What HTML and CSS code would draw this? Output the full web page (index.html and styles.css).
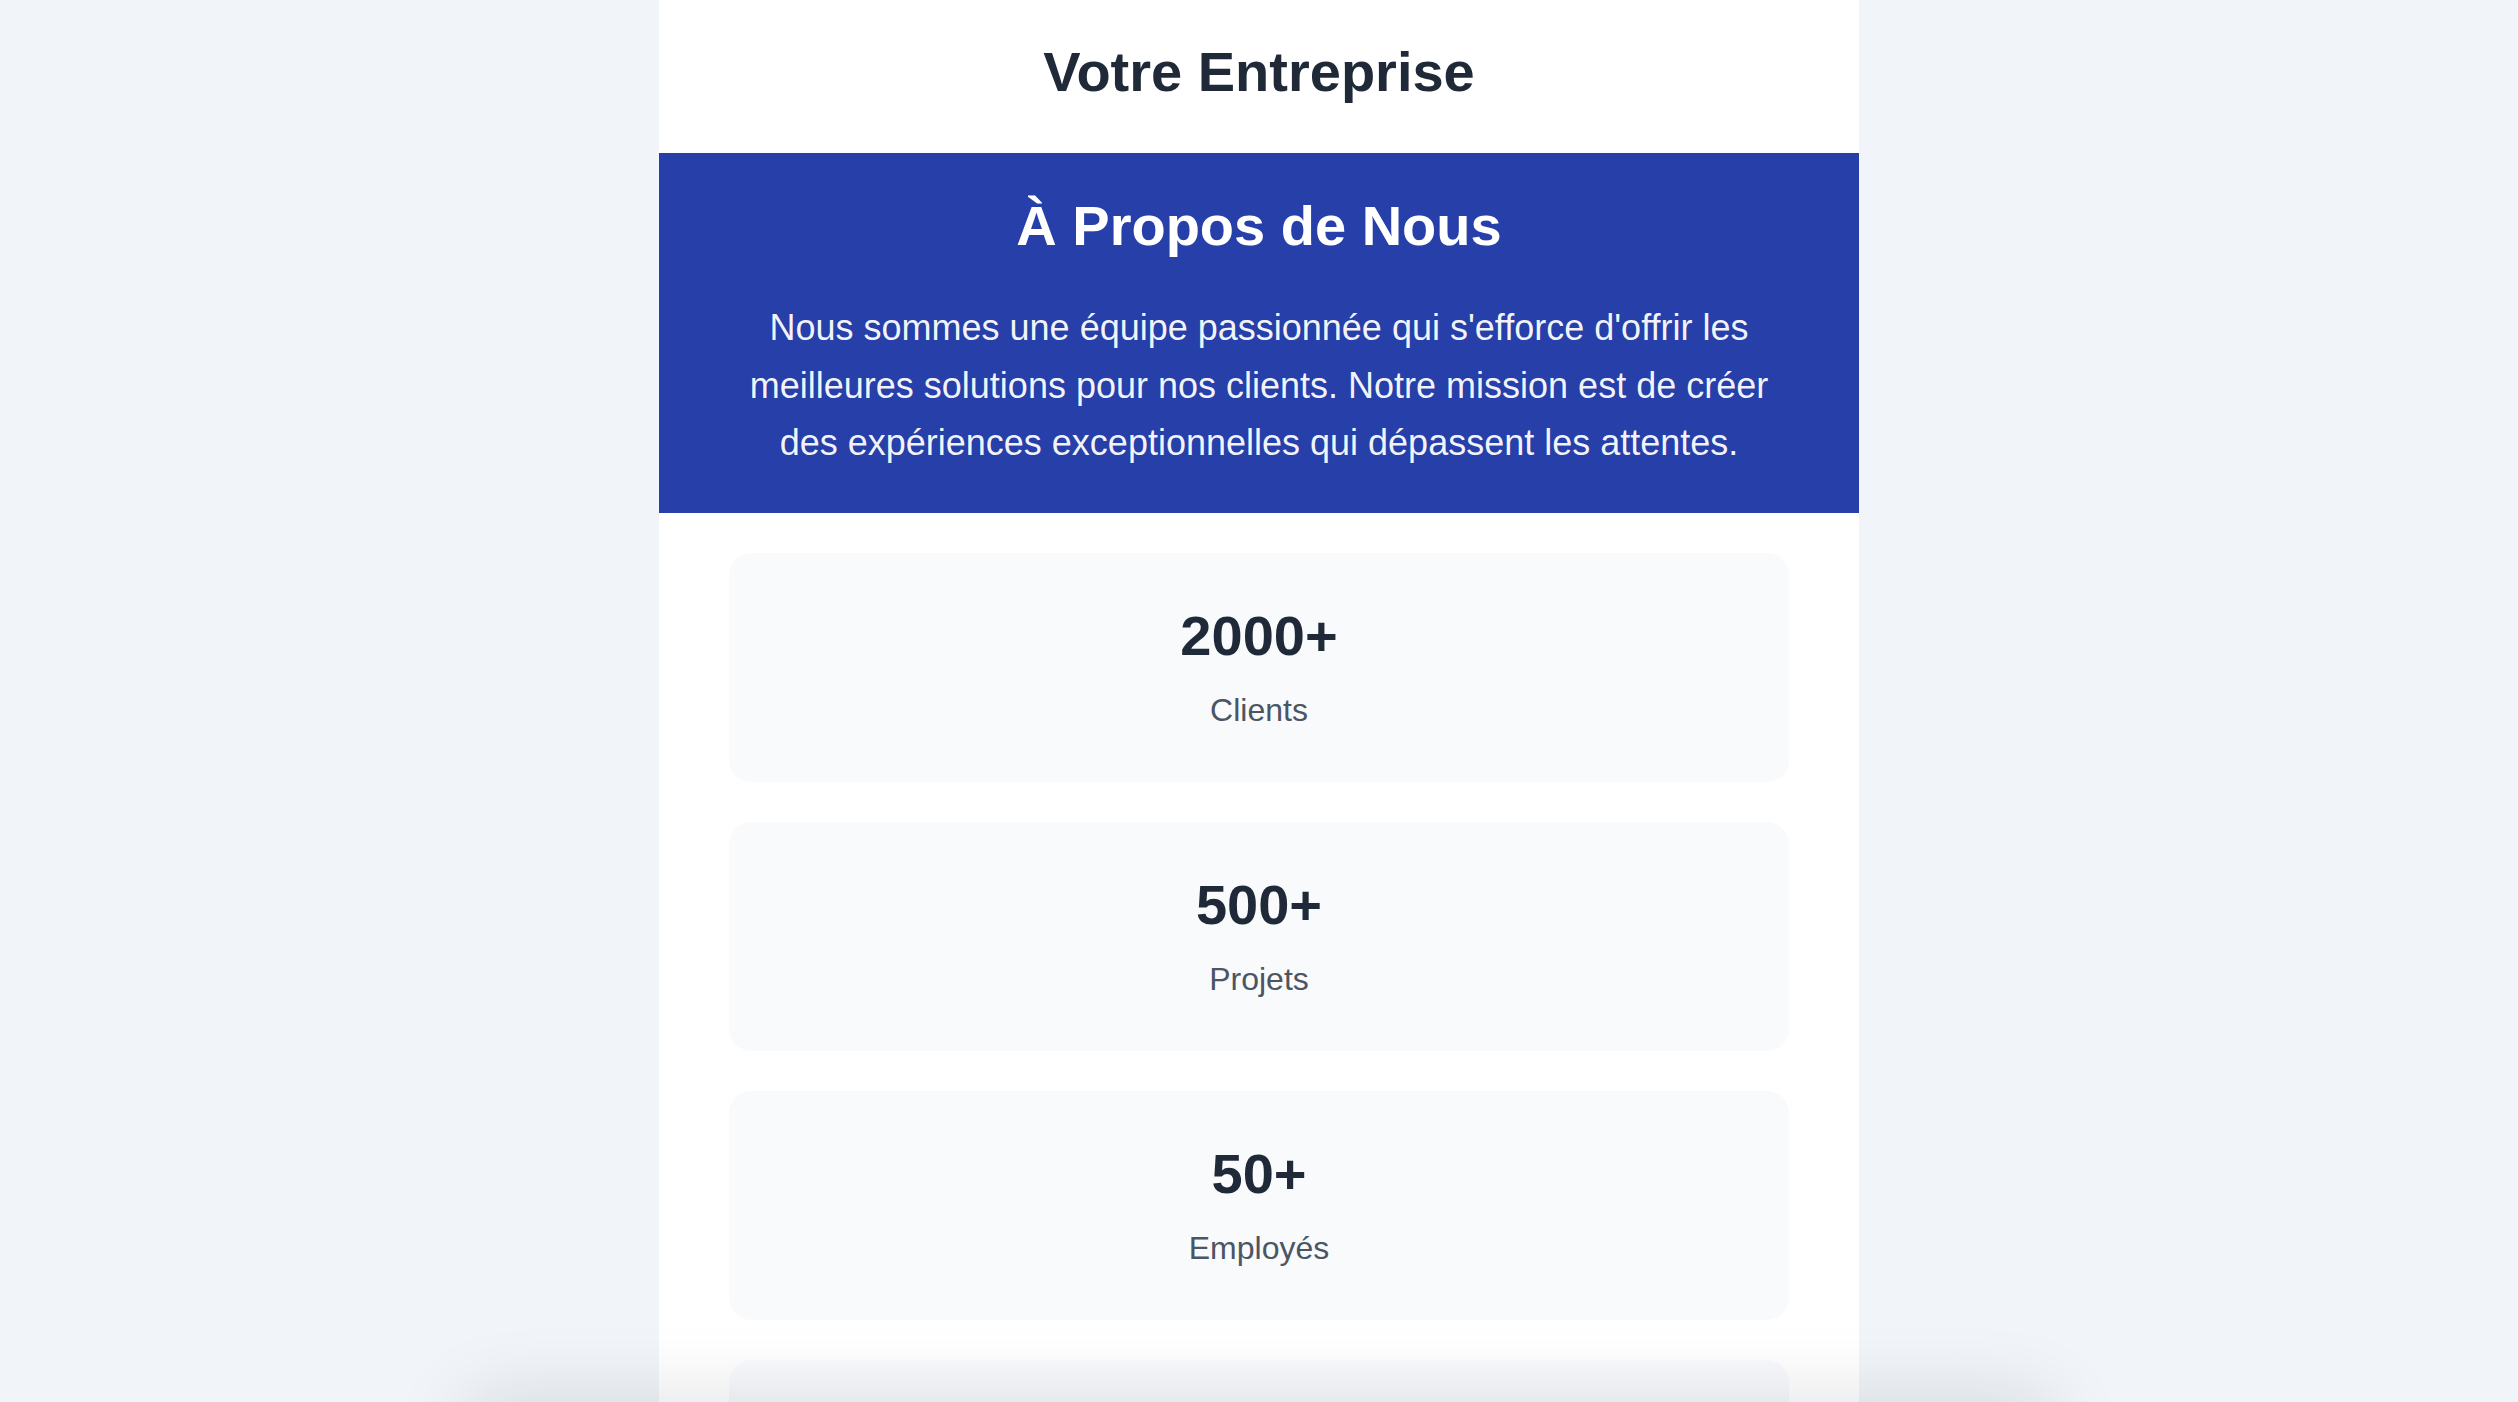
FILE: index.html
```html
<!DOCTYPE html>
<html lang="fr">
<head>
<meta charset="utf-8">
<title>Votre Entreprise</title>
<link rel="stylesheet" href="styles.css">
</head>
<body>
<div class="page">
  <header class="site-header">
    <h1 class="brand">Votre Entreprise</h1>
  </header>
  <section class="about">
    <h2 class="about-title">À Propos de Nous</h2>
    <p class="about-text">Nous sommes une équipe passionnée qui s'efforce d'offrir les meilleures solutions pour nos clients. Notre mission est de créer des expériences exceptionnelles qui dépassent les attentes.</p>
  </section>
  <section class="stats">
    <div class="stat-card">
      <div class="stat-number">2000+</div>
      <div class="stat-label">Clients</div>
    </div>
    <div class="stat-card">
      <div class="stat-number">500+</div>
      <div class="stat-label">Projets</div>
    </div>
    <div class="stat-card">
      <div class="stat-number">50+</div>
      <div class="stat-label">Employés</div>
    </div>
    <div class="stat-card">
      <div class="stat-number">10+</div>
      <div class="stat-label">Années d'expérience</div>
    </div>
  </section>
</div>
<div class="bottom-shade"></div>
</body>
</html>
```

FILE: styles.css
```css
html, body {
  margin: 0;
  padding: 0;
}

body {
  background: #f1f5f9;
  font-family: "Liberation Sans", Arial, sans-serif;
  color: #1f2937;
}

.page {
  width: 1200px;
  margin: 0 auto;
  background: #ffffff;
  min-height: 100vh;
}

.site-header {
  padding: 39px 0 49px;
  text-align: center;
}

.brand {
  margin: 0;
  font-size: 56px;
  font-weight: 700;
  line-height: normal;
  color: #1f2937;
}

.about {
  background: #2740a9;
  padding: 39px 64px 41px;
  text-align: center;
  color: #ffffff;
}

.about-title {
  margin: 0 0 40px;
  font-size: 56px;
  font-weight: 700;
  line-height: 1.2;
  color: #ffffff;
}

.about-text {
  margin: 0;
  font-size: 36px;
  line-height: 1.6;
  color: rgba(255, 255, 255, 0.94);
}

.stats {
  padding: 40px 70px;
  display: flex;
  flex-direction: column;
  gap: 40px;
}

.stat-card {
  background: #f8fafc;
  border-radius: 22px;
  padding: 48px 24px;
  text-align: center;
}

.stat-number {
  font-size: 56px;
  font-weight: 700;
  line-height: 70px;
  margin-bottom: 15px;
  color: #1f2937;
}

.stat-label {
  font-size: 32px;
  line-height: 48px;
  color: #4b5563;
}

.bottom-shade {
  position: fixed;
  top: 100%;
  left: 50%;
  width: 1580px;
  height: 200px;
  transform: translateX(-50%);
  box-shadow: 0 0 80px rgba(15, 23, 42, 0.14);
  pointer-events: none;
  z-index: 10;
}
```
